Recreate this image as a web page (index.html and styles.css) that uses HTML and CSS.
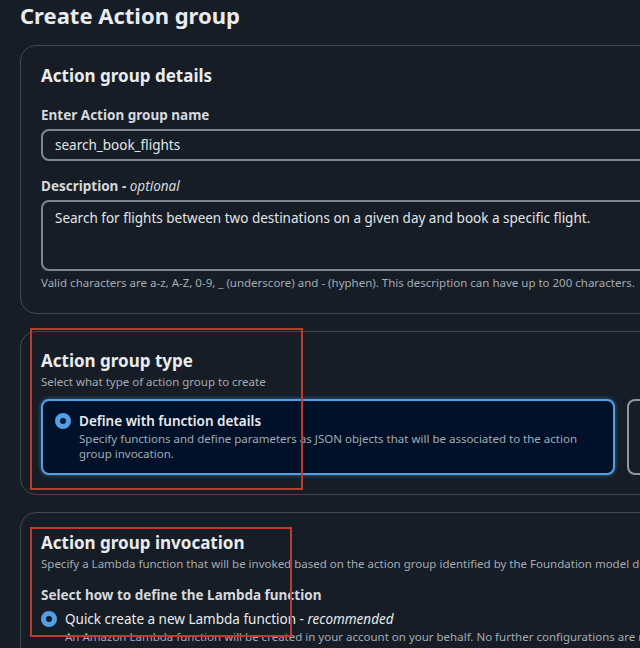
FILE: index.html
```html
<!DOCTYPE html>
<html>
<head lang="en">
    <meta charset="UTF-8">
    <title>Create Action group</title>
    <link rel="stylesheet" href="styles.css">
</head>
<body>
   <div id="page">
       <h1 class="page-title">Create Action group</h1>

       <div class="card">
           <h2 class="card-title">Action group details</h2>
           <div class="field">
               <label class="field-label">Enter Action group name</label>
               <div class="input">search_book_flights</div>
           </div>
           <div class="field">
               <label class="field-label">Description - <i>optional</i></label>
               <div class="input textarea">Search for flights between two destinations on a given day and book a specific flight.</div>
               <p class="hint">Valid characters are a-z, A-Z, 0-9, _ (underscore) and - (hyphen). This description can have up to 200 characters.</p>
           </div>
       </div>

       <div class="card card-type">
           <div class="mark mark-type"></div>
           <h2 class="card-title">Action group type</h2>
           <p class="sub">Select what type of action group to create</p>
           <div class="tiles">
               <div class="tile selected">
                   <span class="radio on"></span>
                   <div>
                       <div class="tile-title">Define with function details</div>
                       <div class="tile-desc">Specify functions and define parameters as JSON objects that will be associated to the action group invocation.</div>
                   </div>
               </div>
               <div class="tile">
                   <span class="radio"></span>
                   <div>
                       <div class="tile-title">Define with API schemas</div>
                       <div class="tile-desc">Define the API schema in OpenAPI format.</div>
                   </div>
               </div>
           </div>
       </div>

       <div class="card card-invoke">
           <div class="mark mark-invoke"></div>
           <h2 class="card-title">Action group invocation</h2>
           <p class="sub">Specify a Lambda function that will be invoked based on the action group identified by the Foundation model during orchestration.</p>
           <div class="field-label select-label">Select how to define the Lambda function</div>
           <div class="option">
               <span class="radio on"></span>
               <div>
                   <div class="option-title">Quick create a new Lambda function - <i>recommended</i></div>
                   <div class="option-desc">An Amazon Lambda function will be created in your account on your behalf. No further configurations are required.</div>
               </div>
           </div>
       </div>
   </div>
</body>
</html>
```

FILE: styles.css
```css
*{
    padding: 0;
    margin: 0;
    box-sizing: border-box;
}
html, body{
    background: #161d26;
    overflow: hidden;
}
body{
    font-family: "Noto Sans", "Open Sans", sans-serif;
    color: #d1d5db;
}
#page{
    width: 1000px;
    padding: 0 20px;
}
.page-title{
    font-size: 22px;
    font-weight: 700;
    color: #e9ebed;
    line-height: 30px;
    margin-bottom: 15px;
}
.card{
    position: relative;
    border: 1px solid #414750;
    border-radius: 16px;
    padding: 18px 20px 0 20px;
    margin-bottom: 17px;
}
.card-title{
    font-size: 17px;
    font-weight: 700;
    color: #e9ebed;
    line-height: 24px;
    margin-bottom: 17px;
}
.field{
    margin-bottom: 15px;
}
.field:last-child{
    margin-bottom: 0;
}
.field-label{
    display: block;
    font-size: 13.5px;
    font-weight: 700;
    color: #d5d9de;
    line-height: 20px;
    margin-bottom: 4px;
}
.field-label i{
    font-weight: 400;
}
.input{
    border: 2px solid #7d8590;
    border-radius: 8px;
    height: 32px;
    padding: 0 12px;
    font-size: 13.5px;
    line-height: 28px;
    color: #e2e5e8;
}
.textarea{
    height: 71px;
    padding-top: 2px;
}
.hint{
    font-size: 11.5px;
    color: #a4abb3;
    line-height: 18px;
    margin-top: 3px;
    padding-bottom: 21px;
}
.card-type{
    padding-top: 17px;
    padding-bottom: 19px;
}
.card-type .card-title, .card-invoke .card-title{
    margin-bottom: 0;
}
.sub{
    font-size: 11.5px;
    color: #a4abb3;
    line-height: 18px;
}
.tiles{
    display: flex;
    gap: 12px;
    margin-top: 8px;
}
.tile{
    display: flex;
    align-items: flex-start;
    gap: 8px;
    width: 574px;
    flex: none;
    height: 76px;
    border: 2px solid #8d99a8;
    border-radius: 8px;
    padding: 10px 12px;
}
.tile.selected{
    background: #001129;
    border-color: #539fe5;
    box-shadow: 0 0 4px rgba(83, 159, 229, 0.6);
}
.radio{
    flex: none;
    width: 16px;
    height: 16px;
    margin-top: 2px;
    border-radius: 50%;
    border: 2px solid #8d99a8;
}
.radio.on{
    border: 5px solid #539fe5;
    background: #0f1b2a;
}
.tile-title{
    font-size: 13.5px;
    font-weight: 600;
    color: #e9ebed;
    line-height: 20px;
}
.tile-desc{
    font-size: 11.5px;
    color: #a4abb3;
    line-height: 15px;
    width: 520px;
}
.card-invoke{
    padding-top: 18px;
    padding-bottom: 20px;
}
.select-label{
    margin-top: 12px;
    margin-bottom: 4px;
}
.option{
    display: flex;
    gap: 8px;
}
.option-title{
    font-size: 13.5px;
    color: #e9ebed;
    line-height: 20px;
}
.option-desc{
    font-size: 11.5px;
    color: #a4abb3;
    line-height: 16px;
    white-space: nowrap;
}
.mark{
    position: absolute;
    border: 2px solid #c0392b;
}
.mark-type{
    left: 9px;
    top: -4px;
    width: 273px;
    height: 162px;
}
.mark-invoke{
    left: 9px;
    top: 14px;
    width: 262px;
    height: 110px;
}
```
